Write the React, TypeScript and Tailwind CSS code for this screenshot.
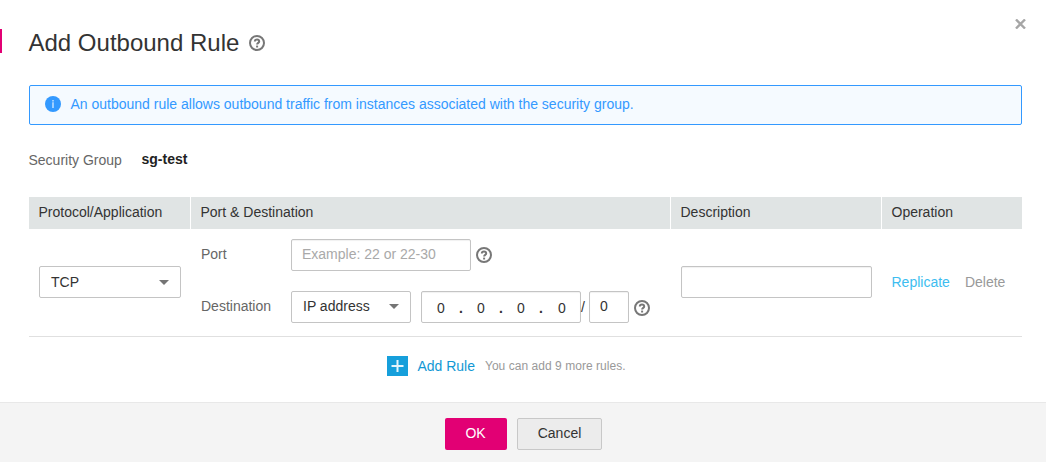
import React from "react";

function HelpIcon({ className = "" }: { className?: string }) {
  return (
    <svg viewBox="0 0 16 16" className={"block h-4 w-4 shrink-0 " + className} fill="none" stroke="#777777">
      <circle cx="8" cy="8" r="7" strokeWidth="2" />
      <path d="M5.8 6.6C5.8 5.1 6.8 4.5 8 4.5s2.2.7 2.2 1.9c0 1.5-2.1 1.5-2.1 3.2" strokeWidth="2" />
      <path d="M8.1 10.6v1.9" strokeWidth="2" />
    </svg>
  );
}

function Caret() {
  return (
    <svg viewBox="0 0 10 5" className="mt-px block h-[5px] w-[10px] shrink-0">
      <path d="M0 0h10L5 5z" fill="#757575" />
    </svg>
  );
}

function Select({ label, className }: { label: string; className: string }) {
  return (
    <button className={"flex h-8 items-center justify-between rounded-[2px] border border-[#c4c4c4] bg-white pr-[11px] pl-[11px] text-[#333333] " + className}>
      <span className="leading-5">{label}</span>
      <Caret />
    </button>
  );
}

const field = "h-8 rounded-[2px] border border-[#c4c4c4] bg-white shadow-[inset_0_1px_1px_rgba(0,0,0,0.06)] outline-none";

export default function App() {
  return (
    <div className="flex h-[462px] w-[1046px] flex-col overflow-hidden bg-white font-['Liberation_Sans',Arial,sans-serif] text-[14px] leading-5 text-[#333333]">
      <header className="flex h-[85px] items-start justify-between pr-[20px]">
        <div className="flex pt-[29px]">
          <span className="h-6 w-[2px] bg-[#e20074]" />
          <h1 className="ml-[26.5px] h-7 w-[211px] text-[24px] leading-7 whitespace-nowrap">Add Outbound Rule</h1>
          <HelpIcon className="mt-[6px] ml-[9.5px]" />
        </div>
        <button aria-label="Close" className="mt-[19px]">
          <svg viewBox="0 0 11 10" className="block h-[10px] w-[11px]">
            <path d="M1 .5l9 9M10 .5l-9 9" stroke="#a6a6a6" strokeWidth="2.4" />
          </svg>
        </button>
      </header>

      <main className="flex h-[317px] flex-col pr-6 pl-[29px]">
        <div className="flex h-10 shrink-0 items-start rounded-[2px] border border-[#3399ff] bg-[#f5faff] pl-[15px] text-[#3399ff]">
          <svg viewBox="0 0 16 16" className="mt-[10px] block h-4 w-4">
            <circle cx="8" cy="8" r="8" fill="#3399ff" />
            <path d="M8 4v1.4M8 6.3V12" stroke="#d8ebff" strokeWidth="1.3" />
          </svg>
          <span className="mt-2 ml-[9.5px] whitespace-nowrap">
            An outbound rule allows outbound traffic from instances associated with the security group.
          </span>
        </div>

        <div className="flex h-[72px] shrink-0 pt-6">
          <span className="mt-px -ml-[0.5px] w-[113px] text-[#666666]">Security Group</span>
          <span className="font-bold text-[#222222]">sg-test</span>
        </div>

        <div className="grid h-8 shrink-0 grid-cols-[161px_479px_210px_140px] gap-px [&>div]:bg-[#e0e4e4] [&>div]:pt-[5px] [&>div]:pl-[9.5px]">
          <div>Protocol/Application</div>
          <div>Port &amp; Destination</div>
          <div>Description</div>
          <div>Operation</div>
        </div>

        <div className="grid h-[108px] shrink-0 grid-cols-[162px_480px_211px_140px] border-b border-[#e0e0e0]">
          <div className="flex items-start pt-[37px] pl-[10px]">
            <Select label="TCP" className="w-[142px]" />
          </div>
          <div className="flex flex-col gap-5 pt-[10px] pl-[10px]">
            <div className="flex h-8">
              <span className="w-[90px] pt-[5px] text-[#666666]">Port</span>
              <input className={field + " w-[180px] px-[10px] pb-[3px] placeholder:text-[#a9a9a9]"} placeholder="Example: 22 or 22-30" />
              <HelpIcon className="mt-2 ml-[5px]" />
            </div>
            <div className="flex h-8">
              <span className="w-[90px] pt-[5px] text-[#666666]">Destination</span>
              <Select label="IP address" className="w-[120px] pb-[2px]" />
              <div className={field + " ml-[10px] flex w-[160px] pt-[6px] pl-[15px]"}>
                <span className="w-[22px]">0</span>
                <span className="w-[18px] font-bold">.</span>
                <span className="w-[22px]">0</span>
                <span className="w-[18px] font-bold">.</span>
                <span className="w-[22px]">0</span>
                <span className="w-[19px] font-bold">.</span>
                <span>0</span>
              </div>
              <span className="w-2 pt-[6px]">/</span>
              <div className={field + " w-10 pt-[4px] pl-[10px]"}>0</div>
              <HelpIcon className="mt-[9px] ml-[5px]" />
            </div>
          </div>
          <div className="flex items-start pt-[37px] pl-[10px]">
            <input aria-label="Description" className={field + " w-[191px] px-[10px]"} />
          </div>
          <div className="flex items-start gap-[15px] pt-[43px] pl-[9.5px]">
            <a className="text-[#3dbdf0]">Replicate</a>
            <a className="text-[#999999]">Delete</a>
          </div>
        </div>

        <div className="flex h-[58px] shrink-0 items-center justify-center pr-[38px]">
          <svg viewBox="0 0 21 20" className="block h-5 w-[21px]">
            <path d="M0 0h21v20H0z" fill="#169fdb" />
            <path d="M4.5 10h12M10.5 4v12" stroke="#e6f5fc" strokeWidth="2" />
          </svg>
          <a className="ml-[9px] text-[#1298d4]">Add Rule</a>
          <span className="ml-[10px] text-[12px] tracking-[0.04px] text-[#999999]">You can add 9 more rules.</span>
        </div>
      </main>

      <footer className="flex h-[60px] shrink-0 justify-center gap-[10px] border-t border-[#e8e8e8] bg-[#f4f4f4] pt-[15px]">
        <button className="h-8 w-[62px] rounded-[2px] bg-[#e20074] pb-[2px] text-white">OK</button>
        <button className="h-8 w-[85px] rounded-[2px] border border-[#c8c8c8] bg-[#ececec] pb-[2px] pl-px">Cancel</button>
      </footer>
    </div>
  );
}
